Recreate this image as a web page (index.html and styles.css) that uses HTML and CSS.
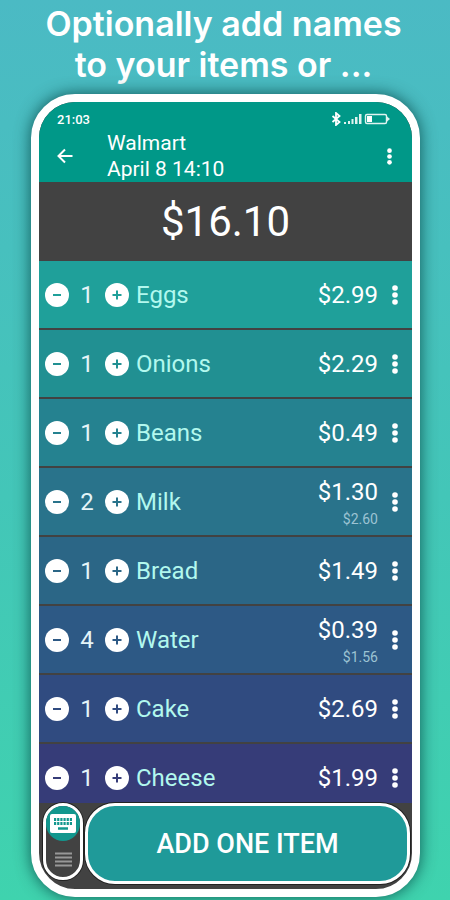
FILE: index.html
```html
<!DOCTYPE html>
<html lang="en">
<head>
  <meta charset="UTF-8">
  <meta name="viewport" content="width=device-width, initial-scale=1">
  <title>Shopping list</title>
  <link rel="stylesheet" href="styles.css">
</head>
<body>

<!-- shared icons -->
<svg class="sprite" aria-hidden="true">
  <symbol id="minus" viewBox="0 0 24 24">
    <circle cx="12" cy="12" r="12" fill="#fff"/>
    <path d="M8 12h8" stroke="currentColor" stroke-width="2"/>
  </symbol>
  <symbol id="plus" viewBox="0 0 24 24">
    <circle cx="12" cy="12" r="12" fill="#fff"/>
    <path d="M7.500 12h9M12 7.500v9" stroke="currentColor" stroke-width="2"/>
  </symbol>
  <symbol id="dots" viewBox="0 0 6 20">
    <circle cx="3" cy="3" r="2.8"/>
    <circle cx="3" cy="10" r="2.8"/>
    <circle cx="3" cy="17" r="2.8"/>
  </symbol>
</svg>

<h1 class="headline">Optionally add names<br>to your items or ...</h1>

<div class="phone">
  <header class="top">
    <div class="status">
      <span class="clock">21:03</span>
      <svg class="status-icons" viewBox="0 0 60 14" width="60" height="14" aria-hidden="true">
        <path d="M1.500 4l7 6-3.500 3V1l3.500 3-7 6" fill="none" stroke="#fff" stroke-width="1.800"/>
        <path d="M13 10h2v2h-2zM17 9h2v3h-2zM20.500 7h2v5h-2zM24 5h2.500v7H24zM28 2h2.500v10H28z" fill="#dff3f0"/>
        <rect x="34.500" y="2.500" width="21" height="9" rx="1.500" fill="none" stroke="#dff3f0" stroke-width="1.400"/>
        <path d="M36 4h5v6h-5z" fill="#fff"/>
        <path d="M56 4.500l3 2.500-3 2.500z" fill="#dff3f0"/>
      </svg>
    </div>
    <div class="bar">
      <button class="icon-button back" aria-label="Back">
        <svg viewBox="0 0 16 16" width="16" height="16"><path d="M15.500 8H2M8 1.500L1.500 8 8 14.500" fill="none" stroke="#fff" stroke-width="2"/></svg>
      </button>
      <div class="title">Walmart<br>April 8 14:10</div>
      <button class="icon-button more-top" aria-label="More">
        <svg width="5" height="17"><use href="#dots"/></svg>
      </button>
    </div>
  </header>

  <div class="total">$16.10</div>

  <ul class="items">
    <li class="item eggs">
      <button class="icon-button" aria-label="Less"><svg class="round"><use href="#minus"/></svg></button>
      <span class="count">1</span>
      <button class="icon-button" aria-label="More"><svg class="round"><use href="#plus"/></svg></button>
      <span class="name">Eggs</span>
      <span class="price">$2.99</span>
      <button class="icon-button more" aria-label="Menu"><svg class="dots"><use href="#dots"/></svg></button>
    </li>
    <li class="item onions">
      <button class="icon-button" aria-label="Less"><svg class="round"><use href="#minus"/></svg></button>
      <span class="count">1</span>
      <button class="icon-button" aria-label="More"><svg class="round"><use href="#plus"/></svg></button>
      <span class="name">Onions</span>
      <span class="price">$2.29</span>
      <button class="icon-button more" aria-label="Menu"><svg class="dots"><use href="#dots"/></svg></button>
    </li>
    <li class="item beans">
      <button class="icon-button" aria-label="Less"><svg class="round"><use href="#minus"/></svg></button>
      <span class="count">1</span>
      <button class="icon-button" aria-label="More"><svg class="round"><use href="#plus"/></svg></button>
      <span class="name">Beans</span>
      <span class="price">$0.49</span>
      <button class="icon-button more" aria-label="Menu"><svg class="dots"><use href="#dots"/></svg></button>
    </li>
    <li class="item milk">
      <button class="icon-button" aria-label="Less"><svg class="round"><use href="#minus"/></svg></button>
      <span class="count">2</span>
      <button class="icon-button" aria-label="More"><svg class="round"><use href="#plus"/></svg></button>
      <span class="name">Milk</span>
      <span class="price">$1.30 <small>$2.60</small></span>
      <button class="icon-button more" aria-label="Menu"><svg class="dots"><use href="#dots"/></svg></button>
    </li>
    <li class="item bread">
      <button class="icon-button" aria-label="Less"><svg class="round"><use href="#minus"/></svg></button>
      <span class="count">1</span>
      <button class="icon-button" aria-label="More"><svg class="round"><use href="#plus"/></svg></button>
      <span class="name">Bread</span>
      <span class="price">$1.49</span>
      <button class="icon-button more" aria-label="Menu"><svg class="dots"><use href="#dots"/></svg></button>
    </li>
    <li class="item water">
      <button class="icon-button" aria-label="Less"><svg class="round"><use href="#minus"/></svg></button>
      <span class="count">4</span>
      <button class="icon-button" aria-label="More"><svg class="round"><use href="#plus"/></svg></button>
      <span class="name">Water</span>
      <span class="price">$0.39 <small>$1.56</small></span>
      <button class="icon-button more" aria-label="Menu"><svg class="dots"><use href="#dots"/></svg></button>
    </li>
    <li class="item cake">
      <button class="icon-button" aria-label="Less"><svg class="round"><use href="#minus"/></svg></button>
      <span class="count">1</span>
      <button class="icon-button" aria-label="More"><svg class="round"><use href="#plus"/></svg></button>
      <span class="name">Cake</span>
      <span class="price">$2.69</span>
      <button class="icon-button more" aria-label="Menu"><svg class="dots"><use href="#dots"/></svg></button>
    </li>
    <li class="item cheese">
      <button class="icon-button" aria-label="Less"><svg class="round"><use href="#minus"/></svg></button>
      <span class="count">1</span>
      <button class="icon-button" aria-label="More"><svg class="round"><use href="#plus"/></svg></button>
      <span class="name">Cheese</span>
      <span class="price">$1.99</span>
      <button class="icon-button more" aria-label="Menu"><svg class="dots"><use href="#dots"/></svg></button>
    </li>
  </ul>

  <footer class="actions">
    <button class="mode" aria-label="Switch input mode">
      <span class="mode-on">
        <svg viewBox="0 0 26 19" width="26" height="19">
          <rect width="26" height="19" rx="2" fill="#fff"/>
          <path d="M4 5.500h18M4 9.500h18" stroke="#12978e" stroke-width="3" stroke-dasharray="2.200 .96"/>
          <path d="M8 14.500h10" stroke="#12978e" stroke-width="2.500"/>
        </svg>
      </span>
      <svg viewBox="0 0 17 15" width="17" height="15">
        <path d="M0 1.500h17M0 5.500h17M0 9.500h17M0 13.500h17" stroke="#989898" stroke-width="2"/>
      </svg>
    </button>
    <button class="add">ADD ONE ITEM</button>
  </footer>
</div>

</body>
</html>
```
FILE: styles.css
```css
* {
  box-sizing: border-box;
}
body {
  margin: 0;
  height: 100vh;
  padding: 3px 30px 3px 31px;
  display: flex;
  flex-direction: column;
  font-family: Roboto, "Liberation Sans", sans-serif;
  color: #fff;
  background: linear-gradient(#4bbac4, #43c6b8 55%, #3fd3ae);
}
.sprite {
  display: none;
}
.headline {
  margin: 0 -20px 9px;
  padding-right: 4px;
  font-family: Inter, sans-serif;
  font-size: 34px;
  font-weight: 600;
  line-height: 41px;
  text-align: center;
}
.phone {
  flex: 1;
  min-height: 0;
  display: flex;
  flex-direction: column;
  border: 8px solid #fff;
  border-radius: 44px;
  overflow: hidden;
  background: #424242;
  box-shadow: 0 0 16px rgba(0, 60, 60, .8);
}
.icon-button {
  display: flex;
  align-items: center;
  justify-content: center;
  padding: 0;
  border: none;
  background: none;
  color: inherit;
  fill: #fff;
  cursor: pointer;
}
.top {
  padding-top: 9px;
  background: #009888;
}
.status {
  display: flex;
  align-items: center;
  justify-content: space-between;
  height: 16px;
  padding: 0 21px 0 18px;
}
.clock {
  font-size: 13px;
  font-weight: 500;
}
.bar {
  display: flex;
  align-items: center;
  padding: 3px 15px 0 17px;
}
.back {
  width: 18px;
}
.title {
  flex: 1;
  margin-left: 33px;
  font-size: 21px;
  line-height: 26px;
}
.more-top {
  width: 16px;
}
.total {
  height: 79px;
  font-size: 42px;
  line-height: 79px;
  text-align: center;
}
.items {
  flex: 1;
  min-height: 0;
  margin: 0;
  padding: 0;
  overflow: hidden;
  list-style: none;
}
.item {
  display: flex;
  align-items: center;
  height: 69px;
  padding-left: 6px;
  border-bottom: 2px solid #424242;
  font-size: 24px;
}
.eggs { background: #1fa09a; color: #1fa09a; }
.onions { background: #219092; color: #219092; }
.beans { background: #258290; color: #258290; }
.milk { background: #29738b; color: #29738b; }
.bread { background: #2b6686; color: #2b6686; }
.water { background: #2d5985; color: #2d5985; }
.cake { background: #304b80; color: #304b80; }
.cheese { background: #363c78; color: #363c78; }
.round {
  width: 24px;
  height: 24px;
}
.count {
  width: 36px;
  color: #e4f4f8;
  text-align: center;
}
.name {
  flex: 1;
  margin-left: 7px;
  color: #b2f8ee;
}
.price {
  color: #fff;
  line-height: 28px;
  text-align: right;
}
.price small {
  display: block;
  margin-top: 6px;
  color: #9cc3d3;
  font-size: 14px;
  line-height: 14px;
}
.more {
  width: 34px;
}
.dots {
  width: 6px;
  height: 20px;
}
.actions {
  display: flex;
  gap: 2px;
  height: 86px;
  padding: 0 2px 5px 4px;
}
.mode {
  display: flex;
  flex-direction: column;
  align-items: center;
  justify-content: flex-start;
  gap: 11px;
  width: 40px;
  height: 77px;
  padding: 0;
  border: 3px solid #fff;
  border-radius: 20px;
  background: #424242;
  box-shadow: 0 0 0 1px #222;
}
.mode-on {
  display: flex;
  align-items: center;
  justify-content: center;
  width: 34px;
  height: 35px;
  border-radius: 17px;
  background: #12978e;
}
.add {
  flex: 1;
  border: 3px solid #fff;
  border-radius: 30px;
  background: #1f9a99;
  box-shadow: 0 0 0 1px #222;
  color: #fff;
  font-family: inherit;
  font-size: 27px;
  font-weight: 500;
}
```
